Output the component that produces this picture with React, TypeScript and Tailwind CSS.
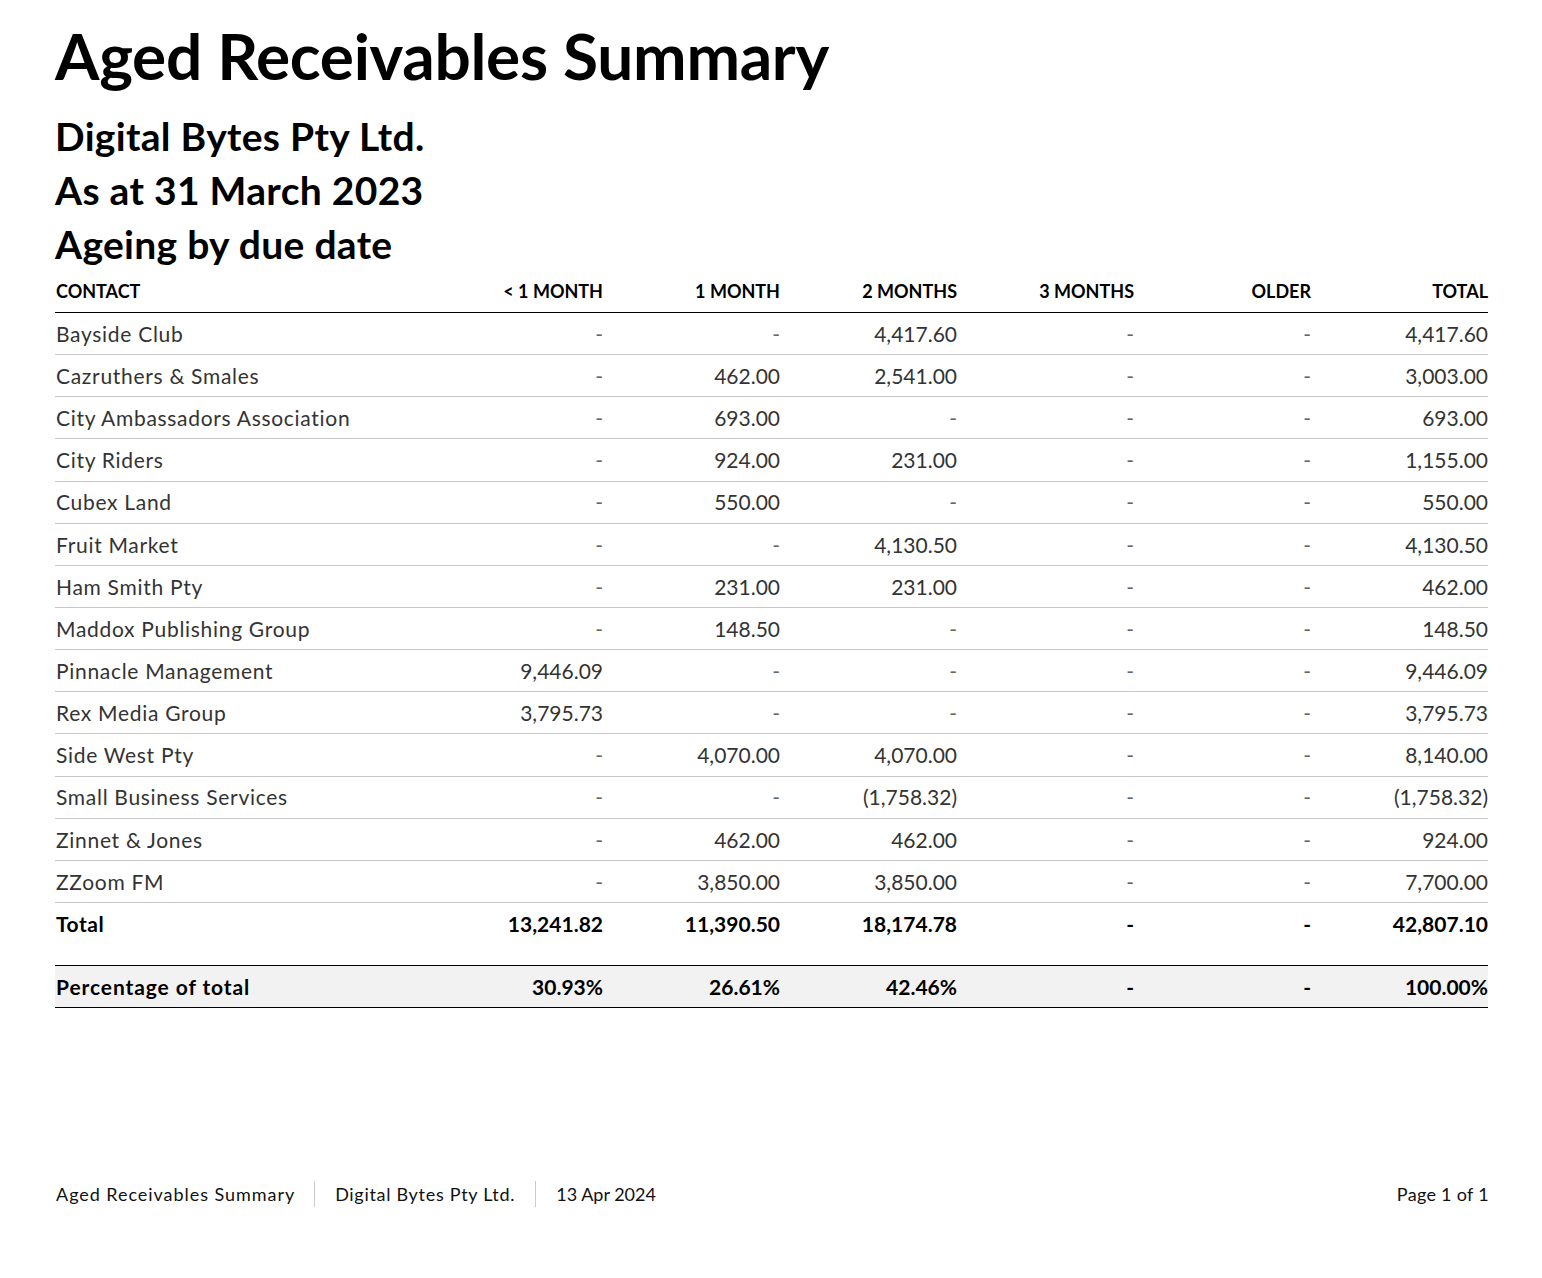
const rows: [string, string, string, string, string, string, string][] = [
  ["Bayside Club", "-", "-", "4,417.60", "-", "-", "4,417.60"],
  ["Cazruthers & Smales", "-", "462.00", "2,541.00", "-", "-", "3,003.00"],
  ["City Ambassadors Association", "-", "693.00", "-", "-", "-", "693.00"],
  ["City Riders", "-", "924.00", "231.00", "-", "-", "1,155.00"],
  ["Cubex Land", "-", "550.00", "-", "-", "-", "550.00"],
  ["Fruit Market", "-", "-", "4,130.50", "-", "-", "4,130.50"],
  ["Ham Smith Pty", "-", "231.00", "231.00", "-", "-", "462.00"],
  ["Maddox Publishing Group", "-", "148.50", "-", "-", "-", "148.50"],
  ["Pinnacle Management", "9,446.09", "-", "-", "-", "-", "9,446.09"],
  ["Rex Media Group", "3,795.73", "-", "-", "-", "-", "3,795.73"],
  ["Side West Pty", "-", "4,070.00", "4,070.00", "-", "-", "8,140.00"],
  ["Small Business Services", "-", "-", "(1,758.32)", "-", "-", "(1,758.32)"],
  ["Zinnet & Jones", "-", "462.00", "462.00", "-", "-", "924.00"],
  ["ZZoom FM", "-", "3,850.00", "3,850.00", "-", "-", "7,700.00"],
];

const headers = ["< 1 MONTH", "1 MONTH", "2 MONTHS", "3 MONTHS", "OLDER", "TOTAL"];

const grid = "grid grid-cols-[371px_repeat(6,177px)] items-center";

export default function App() {
  return (
    <div className="min-h-[1278px] bg-white px-[55px] font-['Lato','Noto_Sans',sans-serif] text-black">
      <h1 className="pt-[21px] text-[64px] font-bold leading-[70px] tracking-[-0.3px]">
        Aged Receivables Summary
      </h1>
      <div className="mt-[18px] text-[39px] font-bold leading-[54px] tracking-[0.3px]">
        <div>Digital Bytes Pty Ltd.</div>
        <div>As at 31 March 2023</div>
        <div>Ageing by due date</div>
      </div>

      <div className="w-[1433px]">
        <div className={`${grid} h-[42px] border-b border-black text-[18px] font-bold`}>
          <div className="pl-[1px]">CONTACT</div>
          {headers.map((h) => (
            <div key={h} className="text-right">
              {h}
            </div>
          ))}
        </div>

        {rows.map((r) => (
          <div key={r[0]} className={`${grid} h-[42.15px] border-b border-[#c8c8c8] text-[21px] text-[#333]`}>
            <div className="pl-[1px] tracking-[0.7px]">{r[0]}</div>
            {r.slice(1).map((v, i) => (
              <div key={i} className={`text-right ${v === "-" ? "text-[#666]" : ""}`}>
                {v}
              </div>
            ))}
          </div>
        ))}

        <div className={`${grid} h-[42px] text-[21px] font-bold`}>
          <div className="pl-[1px] tracking-[0.5px]">Total</div>
          {["13,241.82", "11,390.50", "18,174.78", "-", "-", "42,807.10"].map((v, i) => (
            <div key={i} className="text-right">
              {v}
            </div>
          ))}
        </div>

        <div className={`${grid} mt-[20px] h-[43px] border-y border-black bg-[#f2f2f2] text-[21px] font-bold`}>
          <div className="pl-[1px] tracking-[0.9px]">Percentage of total</div>
          {["30.93%", "26.61%", "42.46%", "-", "-", "100.00%"].map((v, i) => (
            <div key={i} className="text-right">
              {v}
            </div>
          ))}
        </div>
      </div>

      <div className="mt-[173px] flex w-[1434px] items-center justify-between text-[18px] text-[#111]">
        <div className="flex items-center">
          <span className="pl-[1px] pr-[19px] tracking-[0.95px]">Aged Receivables Summary</span>
          <span className="h-[26px] w-px bg-[#ccc]" />
          <span className="px-[20px] tracking-[0.7px]">Digital Bytes Pty Ltd.</span>
          <span className="h-[26px] w-px bg-[#ccc]" />
          <span className="pl-[20px]">13 Apr 2024</span>
        </div>
        <span className="tracking-[0.3px]">Page 1 of 1</span>
      </div>
    </div>
  );
}
